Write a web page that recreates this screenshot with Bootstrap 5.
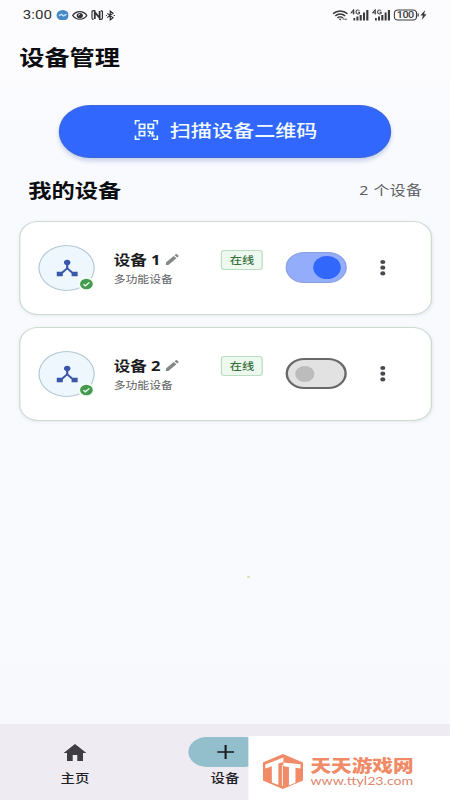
<!DOCTYPE html>
<html lang="zh-CN">
<head>
<meta charset="utf-8">
<meta name="viewport" content="width=device-width, initial-scale=1">
<title>设备管理</title>
<link href="https://cdn.jsdelivr.net/npm/bootstrap@5.3.0/dist/css/bootstrap.min.css" rel="stylesheet">
<style>
body{font-family:"Liberation Sans","Noto Sans CJK SC",sans-serif;background:#fafbfe;color:#111318;width:450px;height:800px;overflow:hidden}
svg{display:block;flex:none}
/* 375-unit wide layout stretched across the 450px window */
.screen{width:375px;height:800px;transform:scaleX(1.2);transform-origin:0 0;background:linear-gradient(#fcfcfe 0,#fcfcfe 75px,#f8fafe 120px,#f8f9fd 100%)}
.statusbar{height:30px;padding:0 19.5px 0 19px;color:#333;font-family:Roboto,sans-serif}
.clock{font-size:12.6px;line-height:30px;width:24.5px;margin-right:3px}
.page-title{font-size:21px;line-height:30px;height:75px;padding:11px 16px 0;font-weight:700;color:#0c0d10;margin:0}
.page-title,.section-title{font-family:"Noto Sans CJK SC",sans-serif}
.scan{width:277px;height:53px;background:#3267fd;color:#f1fbff;font-size:17.6px;gap:9.5px;border:1px solid #3c66dc;box-shadow:0 3px 4px #7088c45c;padding:0 0 3px 1.5px;font-family:"Noto Sans CJK SC",sans-serif;font-weight:500;line-height:1}
.scan:hover{background:#2859e6;color:#fff}
.section-head{height:63px;padding:0 23px 0 23.5px}
.section-title{font-size:19.4px;font-weight:700;color:#0c0d10}
.count{font-size:13.2px;letter-spacing:.4px;color:#5b5d62;font-family:"Noto Sans","Noto Sans CJK SC",sans-serif;padding-top:3px}
.device{width:344px;height:94px;border:1.5px solid #cddccf;border-radius:16px;background:#fefffe;box-shadow:0 1px 3px #6a7b8a20;padding:0 0 1px 15.5px}
.avatar{width:47px;height:46px;border:1.3px solid #b2c8d5;border-radius:50%;background:#edf7fd}
.tick{right:-1px;bottom:-1px}
.info{width:89.5px;margin-left:15.7px;height:36px}
.dname{font-size:13.8px;font-weight:700;line-height:20px;color:#1b1c20;font-family:"Noto Sans","Noto Sans CJK SC",sans-serif}
.dtype{font-size:9.9px;line-height:19px;color:#5e6064;font-family:"Noto Sans CJK SC",sans-serif}
.state{width:35px;height:20px;border:1px solid #bcdcc1;border-radius:3px;background:#edf8ef;color:#39723e;font:500 10.2px/17px "Noto Sans CJK SC",sans-serif;margin-bottom:15px}
.toggle{width:51px;height:31px;border-radius:16px;margin-left:18.8px;background:#93adfb;border:1px solid #8c9fe0;padding:0 3.5px}
.toggle i{width:23px;height:23px;border-radius:50%;background:#3267fb}
.toggle.off{background:#e2e2e3;border:2px solid #69696b;padding:0 6px}
.toggle.off i{width:16px;height:16px;background:#bcbcbc}
.dots{margin-left:27.2px}
.tabs{height:76px;background:#eeecf2}
.tab{width:125px;padding-top:13px}
.tab span{font:500 12px/20px "Noto Sans CJK SC",sans-serif;color:#202126;margin-top:1px}
.pill{width:62px;height:30px;border-radius:15px}
.pill.on{background:#92bfcb}
.speck{width:1.5px;height:1.5px;background:#d6e0a8;left:206px;top:576px}
.mark-box{left:206.7px;top:736px;width:169px;height:64px;background:#fff;padding:7px 0 0 12.5px;gap:6px;color:#f18a67}
.mark-name{font:900 17.2px/17px "Noto Sans CJK SC",sans-serif}
.mark-url{font:400 11.8px/13px Lato,sans-serif;color:#dc8770;margin-top:1.5px}
</style>
<script src="https://cdn.jsdelivr.net/npm/bootstrap@5.3.0/dist/js/bootstrap.bundle.min.js"></script>
</head>
<body>
<svg width="0" height="0" class="position-absolute">
<symbol id="hub" viewBox="0 0 24 24"><path fill="#3a56a9" d="M17 16l-4-4V8.820C14.160 8.400 15 7.300 15 6c0-1.660-1.340-3-3-3S9 4.340 9 6c0 1.300.84 2.400 2 2.820V12l-4 4H2.500v5h5.500v-3.050l4-4.200 4 4.200V21h5.500v-5z"/></symbol>
<symbol id="ok" viewBox="0 0 14 14"><circle cx="7" cy="7" r="7" fill="#f4fbf5"/><circle cx="7" cy="7" r="5.300" fill="#459a50"/><path d="M4.500 7.200l1.700 1.600 3.300-3.400" fill="none" stroke="#e6f7e8" stroke-width="1.300"/></symbol>
<symbol id="pen" viewBox="3 3 18 18"><path fill="#85878b" d="M3 17.250V21h3.750L17.810 9.940l-3.750-3.750zM20.710 7.040a1 1 0 000-1.410l-2.340-2.340a1 1 0 00-1.410 0l-1.830 1.830 3.750 3.750z"/></symbol>
<symbol id="more" viewBox="0 0 6 18"><g fill="#48494e"><circle cx="3" cy="3" r="2.100"/><circle cx="3" cy="8.700" r="2.100"/><circle cx="3" cy="14.400" r="2.100"/></g></symbol>
<symbol id="cell" viewBox="0 0 16 12"><path fill="none" stroke="#3a3a3c" stroke-width=".9" d="M2.700 5.500V.8L.4 3.900h3.200M7.600 1.500C6 .2 4.600 1.300 4.700 3c.1 2 1.900 2.500 2.900 1.500V3.200H6.300"/><path fill="#3a3a3c" d="M2.500 9H4v2.500H2.500zM5 7.500h1.700v4H5zM7.700 6h1.800v5.500H7.700zM10.500 3.500h1.700v8h-1.700zM13.200 1H15v10.500h-1.800z"/></symbol>
</svg>
<div class="screen position-relative d-flex flex-column">
  <div class="statusbar d-flex align-items-center">
    <span class="clock">3:00</span>
    <svg width="10.500" height="10.500" viewBox="0 0 10 10"><circle cx="5" cy="5" r="5" fill="#4689c5"/><path d="M2 5.600L3.800 4l2 1.600L8 4" fill="none" stroke="#c7e5fa" stroke-width="1.200"/></svg>
    <svg width="13" height="11" style="margin-left:3px" viewBox="0 0 13 11" fill="none" stroke="#333"><path d="M.6 5.500C3.500.4 9.500.4 12.400 5.500 9.500 10.400 3.500 10.400.6 5.500z" stroke-width="1.200"/><circle cx="6.500" cy="5.500" r="2.600" fill="#333" stroke="none"/><path d="M5 5.500L6.700 4" stroke="#fff" stroke-width=".8"/></svg>
    <svg width="10" height="10" style="margin-left:2.500px" viewBox="0 0 10 10"><path d="M3.500.6H2Q.6.600.6 2v6Q.6 9.400 2 9.400M6.500 9.400H8Q9.400 9.400 9.400 8V2Q9.400.6 8 .6" fill="none" stroke="#333" stroke-width="1.100"/><path d="M3 9V2l4 6V1" fill="none" stroke="#333" stroke-width="1.500"/></svg>
    <svg width="8" height="11" style="margin-left:2.500px" viewBox="0 0 9 11"><path d="M1.500 3l5.500 5-2.600 2.400V.6L7 3 1.500 8M0 5.500h1.200M7.500 5.500h1.200" fill="none" stroke="#333" stroke-width="1.200"/></svg>
    <svg class="ms-auto" width="13" height="11" viewBox="0 0 13 11"><g fill="none" stroke="#3a3a3c" stroke-width="1.400"><path d="M.5 3.800C4 .1 9 .1 12.500 3.800M2.400 5.900c2.400-2.500 5.800-2.500 8.200 0M4.200 7.900c1.400-1.400 3.200-1.400 4.600 0"/></g><path fill="#3a3a3c" d="M5.300 8.700h2.400L6.500 10.500zM8.500 9.500l1-1.400 1 1.400zM10.300 8.800h2l-1 1.500z"/></svg>
    <svg width="16" height="12" style="margin-left:2px"><use href="#cell"/></svg>
    <svg width="16" height="12" style="margin-left:1.500px"><use href="#cell"/></svg>
    <svg width="28" height="12" style="margin-left:2px" viewBox="0 0 28 12"><rect x=".6" y="1" width="18.500" height="10" rx="3" fill="none" stroke="#3a3a3c"/><text x="9.900" y="9.200" text-anchor="middle" font-size="9" font-weight="500" fill="#3a3a3c" textLength="14.500">100</text><path fill="#3a3a3c" d="M20 4.500h1v3h-1zM26.300 1l-4 5.500h2.100L23.500 11l4-5.800h-2.100z"/></svg>
  </div>
  <h1 class="page-title">设备管理</h1>
  <button class="scan btn rounded-pill d-flex align-items-center justify-content-center align-self-center">
    <svg width="20" height="20" viewBox="0 0 20 20" fill="none" stroke="#e3f8ff" stroke-width="1.600"><path d="M.8 4.500V.8h3.700M15.500.8h3.700v3.700M19.200 15.500v3.700h-3.700M4.500 19.200H.8v-3.700M4.200 4.200h4.300v4.300H4.200zM11.500 4.200h4.300v4.300h-4.300zM4.200 11.500h4.300v4.300H4.200zM11 11.500h2v2h2.200v-2.300M11 15.800h2M15 13.500v2.500h2"/></svg>
    <span>扫描设备二维码</span>
  </button>
  <div class="section-head d-flex align-items-center justify-content-between">
    <h2 class="section-title m-0">我的设备</h2><span class="count">2 个设备</span>
  </div>
  <main class="d-flex flex-column align-items-center flex-grow-1" style="gap:12px">
    <section class="device d-flex align-items-center">
      <div class="avatar position-relative d-flex align-items-center justify-content-center"><svg width="22" height="22"><use href="#hub"/></svg><svg class="tick position-absolute" width="14" height="14"><use href="#ok"/></svg></div>
      <div class="info"><div class="dname d-flex align-items-center gap-1">设备 1 <svg width="11" height="11"><use href="#pen"/></svg></div><div class="dtype">多功能设备</div></div>
      <span class="state text-center">在线</span>
      <div class="toggle d-flex align-items-center justify-content-end" role="switch" aria-checked="true"><i></i></div>
      <svg class="dots" width="6" height="18"><use href="#more"/></svg>
    </section>
    <section class="device d-flex align-items-center">
      <div class="avatar position-relative d-flex align-items-center justify-content-center"><svg width="22" height="22"><use href="#hub"/></svg><svg class="tick position-absolute" width="14" height="14"><use href="#ok"/></svg></div>
      <div class="info"><div class="dname d-flex align-items-center gap-1">设备 2 <svg width="11" height="11"><use href="#pen"/></svg></div><div class="dtype">多功能设备</div></div>
      <span class="state text-center">在线</span>
      <div class="toggle off d-flex align-items-center" role="switch" aria-checked="false"><i></i></div>
      <svg class="dots" width="6" height="18"><use href="#more"/></svg>
    </section>
  </main>
  <div class="speck position-absolute"></div>
  <nav class="tabs d-flex">
    <div class="tab d-flex flex-column align-items-center"><div class="pill d-flex align-items-center justify-content-center"><svg width="19" height="17" viewBox="2 3 20 17" preserveAspectRatio="none"><path fill="#3e3d42" d="M10 20v-6h4v6h5v-8h3L12 3 2 12h3v8z"/></svg></div><span>主页</span></div>
    <div class="tab d-flex flex-column align-items-center"><div class="pill on d-flex align-items-center justify-content-center"><svg width="14" height="14" viewBox="0 0 14 14"><path fill="none" stroke="#15181c" stroke-width="1.700" d="M7 0v14M0 7h14"/></svg></div><span>设备</span></div>
  </nav>
  <aside class="mark-box position-absolute d-flex align-items-center">
    <svg width="33.500" height="35" viewBox="0 0 40 35" preserveAspectRatio="none"><path fill="#f18a67" d="M20 0l20 8.500v18L20 35 0 26.500v-18z"/><path fill="#fff" d="M2.500 10.500L20.500 3.500v4.500l-5 1.500v21.500L9 28.500V12.200L2.500 14.500zM20.500 8.500l17 1.800v4.200l-5-.8v15L26 31.500V13l-5.500-.8z"/><path fill="none" stroke="#fff" stroke-width=".9" d="M19.500 11v21"/></svg>
    <div class="d-flex flex-column"><span class="mark-name">天天游戏网</span><span class="mark-url">www.ttyl23.com</span></div>
  </aside>
</div>
</body>
</html>
